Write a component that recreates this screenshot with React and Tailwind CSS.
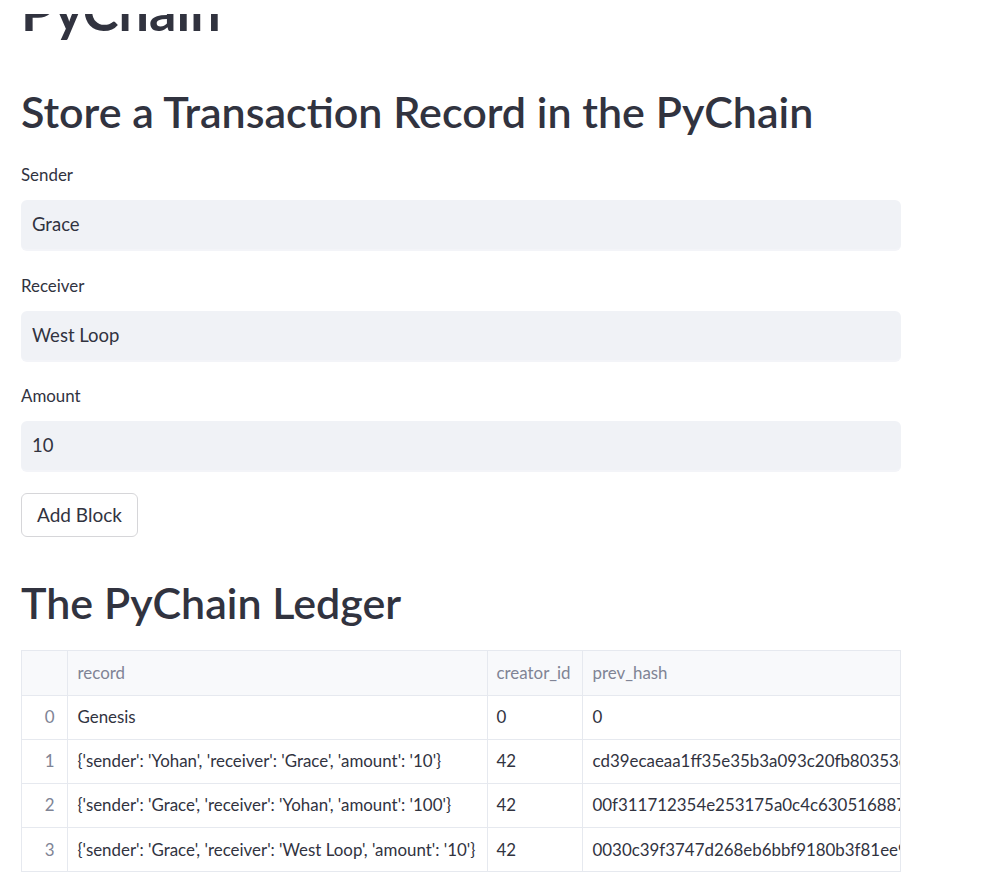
import React from 'react';

const rows = [
  { idx: 0, record: 'Genesis', creator: '0', hash: '0' },
  { idx: 1, record: "{'sender': 'Yohan', 'receiver': 'Grace', 'amount': '10'}", creator: '42', hash: 'cd39ecaeaa1ff35e35b3a093c20fb80353d31a6c0e8f5d2b9a4e1c7d3f8b2a60' },
  { idx: 2, record: "{'sender': 'Grace', 'receiver': 'Yohan', 'amount': '100'}", creator: '42', hash: '00f311712354e253175a0c4c63051688778b4e2d9c1a7f3b6e8d0c5a2b9f4e17' },
  { idx: 3, record: "{'sender': 'Grace', 'receiver': 'West Loop', 'amount': '10'}", creator: '42', hash: '0030c39f3747d268eb6bbf9180b3f81ee9f6b2c4d8a1e7f3b5c9d0a6e2f8b41c' },
];

const Field = ({ label, value, gap }) => (
  <div className={gap}>
    <label className="block text-[16.9px] leading-[22px] text-[#31333f]">{label}</label>
    <div className="mt-[14px] h-[51px] rounded-[6px] bg-[#f0f2f6] border-b-2 border-[#f3f4f8] px-[11px] flex items-center text-[18.5px] text-[#31333f]">
      {value}
    </div>
  </div>
);

export default function App() {
  return (
    <div className="relative min-h-screen bg-white overflow-hidden" style={{ fontFamily: 'Lato, "Noto Sans", sans-serif' }}>
      {/* sticky app header covering the scrolled title */}
      <div className="absolute top-0 left-0 right-0 h-[14px] bg-white z-10"></div>

      <div className="pl-[21px] w-[901px]">
        <h1 className="-mt-[22px] text-[54px] leading-[66px] font-bold text-[#31333f]">PyChain</h1>

        <h2 className="mt-[41px] text-[43px] leading-[54px] font-semibold text-[#31333f]">Store a Transaction Record in the PyChain</h2>

        <Field label="Sender" value="Grace" gap="mt-[25px]" />
        <Field label="Receiver" value="West Loop" gap="mt-[24px]" />
        <Field label="Amount" value="10" gap="mt-[23px]" />

        <button className="mt-[21px] h-[44px] px-[15px] rounded-[6px] border border-[#d6d6d9] bg-white text-[19px] text-[#31333f]">
          Add Block
        </button>

        <h2 className="mt-[39px] text-[43px] leading-[54px] font-semibold text-[#31333f]">The PyChain Ledger</h2>

        <div className="mt-[20px] w-[880px] overflow-hidden border border-[#e6e9ef]">
          <table className="table-fixed w-[1160px] border-collapse text-[16.9px] text-[#31333f] whitespace-nowrap">
            <colgroup>
              <col className="w-[45px]" />
              <col className="w-[420px]" />
              <col className="w-[95px]" />
              <col className="w-[600px]" />
            </colgroup>
            <thead>
              <tr className="bg-[#f8f9fb] h-[44px]">
                <th className="border-r border-[#e6e9ef]"></th>
                <th className="px-[10px] text-left font-normal text-[#808495] border-r border-[#e6e9ef]">record</th>
                <th className="px-[9px] text-left font-normal text-[#808495] border-r border-[#e6e9ef]">creator_id</th>
                <th className="px-[10px] text-left font-normal text-[#808495]">prev_hash</th>
              </tr>
            </thead>
            <tbody>
              {rows.map((r) => (
                <tr key={r.idx} className="h-[44px] border-t border-[#e6e9ef]">
                  <td className="text-right pr-[12px] text-[#808495] border-r border-[#e6e9ef]">{r.idx}</td>
                  <td className="px-[10px] border-r border-[#e6e9ef] overflow-hidden">{r.record}</td>
                  <td className="px-[9px] border-r border-[#e6e9ef]">{r.creator}</td>
                  <td className="px-[10px] overflow-hidden">{r.hash}</td>
                </tr>
              ))}
            </tbody>
          </table>
        </div>
      </div>
    </div>
  );
}
